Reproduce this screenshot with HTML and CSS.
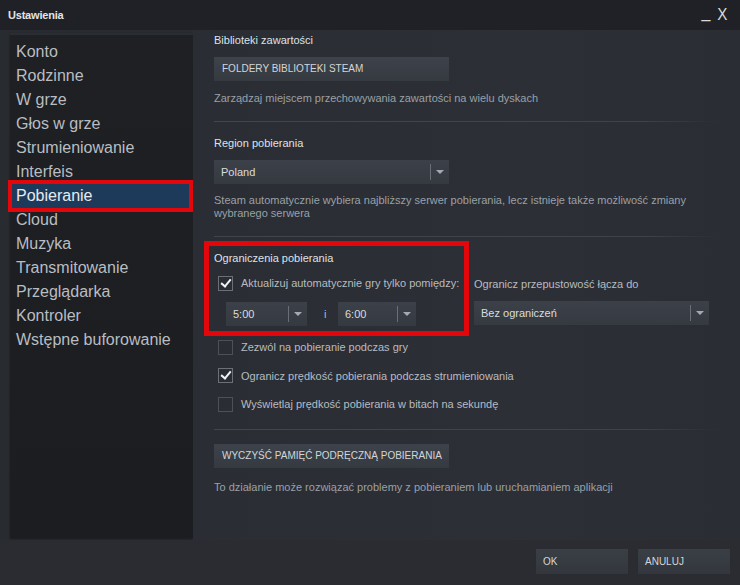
FILE: index.html
```html
<!DOCTYPE html>
<html lang="pl">
<head>
<meta charset="utf-8">
<title>Ustawienia</title>
<link rel="stylesheet" href="styles.css">
</head>
<body>
<div class="window">
  <div class="titlebar">
    <span class="title">Ustawienia</span>
    <span class="winctl"><span class="min">_</span><span class="close">X</span></span>
  </div>
  <div class="main">
    <nav class="sidebar">
      <div class="nav-item">Konto</div>
      <div class="nav-item">Rodzinne</div>
      <div class="nav-item">W grze</div>
      <div class="nav-item">Głos w grze</div>
      <div class="nav-item">Strumieniowanie</div>
      <div class="nav-item">Interfeis</div>
      <div class="nav-item active">Pobieranie</div>
      <div class="nav-item">Cloud</div>
      <div class="nav-item">Muzyka</div>
      <div class="nav-item">Transmitowanie</div>
      <div class="nav-item">Przeglądarka</div>
      <div class="nav-item">Kontroler</div>
      <div class="nav-item">Wstępne buforowanie</div>
    </nav>
    <section class="content">
      <div class="heading first">Biblioteki zawartości</div>
      <div class="btn wide">FOLDERY BIBLIOTEKI STEAM</div>
      <div class="desc">Zarządzaj miejscem przechowywania zawartości na wielu dyskach</div>
      <div class="divider"></div>

      <div class="heading">Region pobierania</div>
      <div class="select wide"><span class="sel-text">Poland</span><span class="sel-arrow"></span></div>
      <div class="desc two">Steam automatycznie wybiera najbliższy serwer pobierania, lecz istnieje także możliwość zmiany wybranego serwera</div>
      <div class="divider second"></div>

      <div class="limits">
        <div class="limits-left">
          <div class="heading">Ograniczenia pobierania</div>
          <div class="check-row first-check"><span class="cb checked"></span><span class="cb-label">Aktualizuj automatycznie gry tylko pomiędzy:</span></div>
          <div class="times">
            <div class="select time1"><span class="sel-text">5:00</span><span class="sel-arrow"></span></div>
            <span class="and">i</span>
            <div class="select time2"><span class="sel-text">6:00</span><span class="sel-arrow"></span></div>
          </div>
        </div>
        <div class="limits-right">
          <div class="label-right">Ogranicz przepustowość łącza do</div>
          <div class="select bw"><span class="sel-text">Bez ograniczeń</span><span class="sel-arrow"></span></div>
        </div>
      </div>

      <div class="checks">
        <div class="check-row"><span class="cb"></span><span class="cb-label">Zezwól na pobieranie podczas gry</span></div>
        <div class="check-row"><span class="cb checked"></span><span class="cb-label">Ogranicz prędkość pobierania podczas strumieniowania</span></div>
        <div class="check-row"><span class="cb"></span><span class="cb-label">Wyświetlaj prędkość pobierania w bitach na sekundę</span></div>
      </div>
      <div class="divider third"></div>

      <div class="btn wide clear">WYCZYŚĆ PAMIĘĆ PODRĘCZNĄ POBIERANIA</div>
      <div class="desc last">To działanie może rozwiązać problemy z pobieraniem lub uruchamianiem aplikacji</div>
    </section>
  </div>
  <div class="footer">
    <div class="btn foot">OK</div>
    <div class="btn foot">ANULUJ</div>
  </div>
</div>
</body>
</html>
```

FILE: styles.css
```css
*, *::before, *::after { box-sizing: border-box; }
html, body { margin: 0; padding: 0; }
body {
  width: 740px;
  height: 585px;
  overflow: hidden;
  background: #25282d;
  font-family: "Liberation Sans", Arial, sans-serif;
}
.window {
  width: 740px;
  height: 585px;
  display: flex;
  flex-direction: column;
  background: #282b30;
}
.titlebar {
  height: 30px;
  flex: none;
  display: flex;
  align-items: center;
  justify-content: space-between;
  padding: 0 12px 0 8px;
  background: #1f2126;
  color: #e2e4e6;
}
.title {
  font-size: 11px;
  font-weight: bold;
  letter-spacing: -0.2px;
}
.winctl {
  display: flex;
  gap: 7px;
  font-size: 16px;
  color: #d8dadc;
}
.winctl .min { position: relative; top: -2px; }
.winctl .close { transform: scaleX(0.95); font-weight: normal; }
.main {
  height: 510px;
  flex: none;
  display: flex;
}
.sidebar {
  width: 183px;
  margin: 3px 0 2px 10px;
  padding-top: 5px;
  background: linear-gradient(#1e2024, #1b1d21);
  border-top: 2px solid #2a2d33;
  box-shadow: 0 1px 2px rgba(0,0,0,0.4);
  flex: none;
}
.nav-item {
  height: 24px;
  line-height: 24px;
  padding-left: 4px;
  margin: 0 2px;
  font-size: 16px;
  color: #b9bdc1;
  white-space: nowrap;
}
.nav-item.active {
  background: #1e3a5a;
  color: #e6eaee;
  outline: 4px solid #e3070b;
  outline-offset: 0;
  position: relative;
  z-index: 1;
  margin: 0 4px 0 2px;
  padding-left: 4px;
}
.content {
  flex: 1;
  padding: 3px 10px 0 21px;
  background: linear-gradient(90deg, #2a2d33, #2c2f35 60%, #2a2d33);
  color: #c8ccd0;
}
.heading {
  font-size: 11px;
  line-height: 14px;
  height: 14px;
  color: #dfe2e5;
  margin-top: 14px;
}
.heading.first { margin-top: 0; }
.btn {
  height: 24px;
  line-height: 24px;
  padding-left: 8px;
  font-size: 10px;
  color: #d3d6d9;
  background: linear-gradient(#3e434b, #353a41);
  white-space: nowrap;
}
.wide { width: 235px; margin-top: 10px; }
.desc {
  margin-top: 10px;
  font-size: 11px;
  line-height: 14px;
  color: #9aa0a7;
}
.desc.two { line-height: 13px; width: 500px; }
.divider {
  height: 1px;
  background: linear-gradient(90deg, #41454d, #3e424a 85%, rgba(62,66,74,0));
  margin-top: 16px;
  width: 505px;
}
.select {
  height: 24px;
  display: flex;
  align-items: center;
  background: linear-gradient(#3c4149, #353a41);
}
.sel-text {
  flex: 1;
  padding-left: 7px;
  font-size: 11px;
  color: #d9dcdf;
}
.sel-arrow {
  width: 19px;
  height: 16px;
  border-left: 1px solid #6a6f76;
  position: relative;
  flex: none;
}
.sel-arrow::after {
  content: "";
  position: absolute;
  left: 5px;
  top: 6px;
  border-left: 4px solid transparent;
  border-right: 4px solid transparent;
  border-top: 4px solid #a5aab0;
}
.limits {
  display: flex;
}
.limits-left {
  width: 260px;
  position: relative;
}
.limits-left::before {
  content: "";
  position: absolute;
  left: -10px;
  top: 4px;
  width: 265px;
  height: 95px;
  border: 5px solid #e3070b;
  pointer-events: none;
}
.limits-right {
  padding-top: 39px;
}
.check-row {
  height: 16px;
  display: flex;
  align-items: center;
  margin-left: 4px;
}
.first-check { margin-top: 10px; }
.cb {
  width: 15px;
  height: 15px;
  border: 1px solid #4c5057;
  background: #2a2d33;
  position: relative;
  flex: none;
}
.cb.checked { border-color: #6b7077; }
.cb.checked::after {
  content: "";
  position: absolute;
  left: 4px;
  top: 0px;
  width: 6px;
  height: 10px;
  border-right: 2px solid #f2f3f4;
  border-bottom: 2px solid #f2f3f4;
  transform: rotate(40deg);
}
.cb-label {
  margin-left: 8px;
  font-size: 11px;
  color: #b7bcc1;
  white-space: nowrap;
}
.times {
  display: flex;
  align-items: center;
  margin-top: 11px;
  margin-left: 12px;
}
.time1 { width: 81px; }
.time2 { width: 78px; }
.and {
  width: 31px;
  padding-left: 17px;
  font-size: 11px;
  color: #b7bcc1;
}
.label-right {
  height: 16px;
  line-height: 16px;
  font-size: 11px;
  color: #b7bcc1;
  white-space: nowrap;
}
.bw { width: 235px; margin-top: 9px; }
.checks {
  margin-top: 13px;
  display: flex;
  flex-direction: column;
  gap: 12.5px;
}
.divider.third { margin-top: 17px; }
.clear { margin-top: 14px; }
.desc.last { margin-top: 12px; }
.footer {
  flex: 1;
  display: flex;
  justify-content: flex-end;
  gap: 10px;
  padding: 9px 10px 0 0;
  background: #2a2c31;
}
.btn.foot {
  width: 92px;
  height: 25px;
  line-height: 25px;
  padding-left: 7px;
  background: linear-gradient(#3a3f46, #33373d);
}
```
